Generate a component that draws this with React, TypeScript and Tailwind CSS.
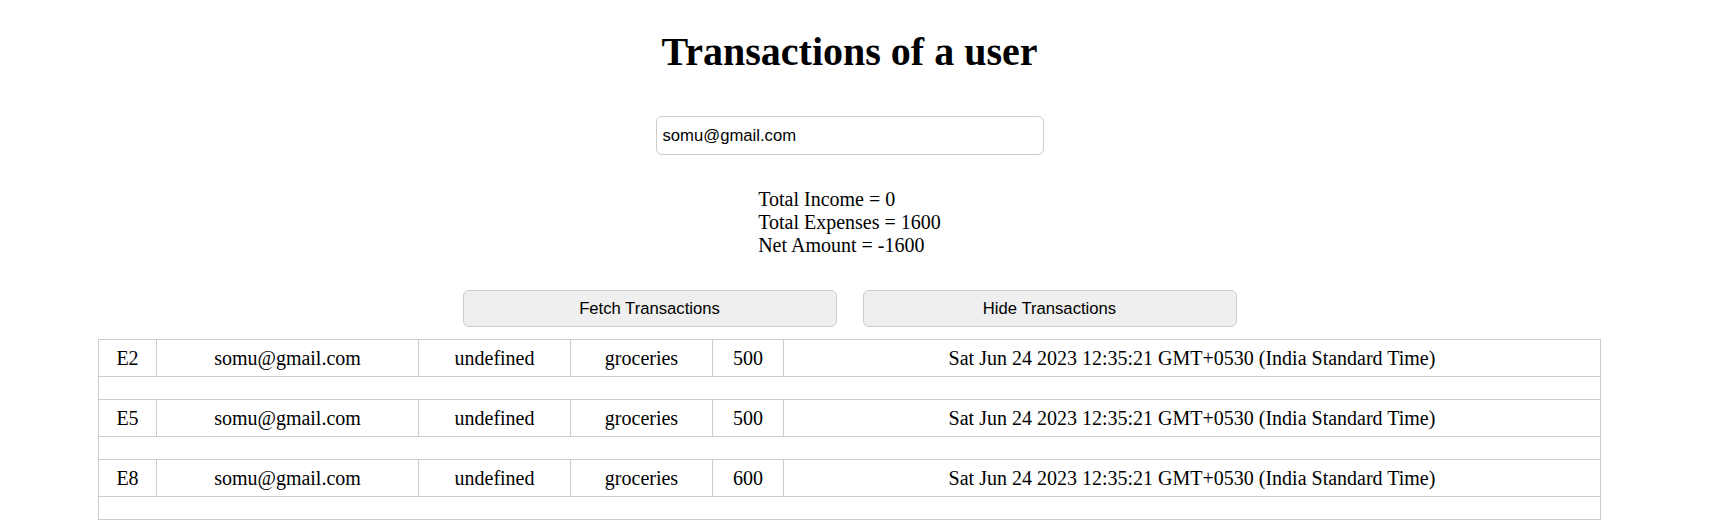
import React from "react";

interface Transaction {
  id: string;
  email: string;
  type: string;
  category: string;
  amount: number;
  date: string;
}

const transactions: Transaction[] = [
  {
    id: "E2",
    email: "somu@gmail.com",
    type: "undefined",
    category: "groceries",
    amount: 500,
    date: "Sat Jun 24 2023 12:35:21 GMT+0530 (India Standard Time)",
  },
  {
    id: "E5",
    email: "somu@gmail.com",
    type: "undefined",
    category: "groceries",
    amount: 500,
    date: "Sat Jun 24 2023 12:35:21 GMT+0530 (India Standard Time)",
  },
  {
    id: "E8",
    email: "somu@gmail.com",
    type: "undefined",
    category: "groceries",
    amount: 600,
    date: "Sat Jun 24 2023 12:35:21 GMT+0530 (India Standard Time)",
  },
];

const App: React.FC = () => {
  const cell = "border border-[#cccccc] px-2 py-[6px] text-center leading-[24px]";

  return (
    <div className="flex flex-col w-[1699px] min-h-[528px] bg-white font-['Liberation_Serif',serif] text-[20px] text-black">
      <h1 className="mt-[29px] text-center text-[40px] font-bold leading-[46px]">
        Transactions of a user
      </h1>

      <div className="flex justify-center mt-[41px]">
        <input
          type="text"
          defaultValue="somu@gmail.com"
          className="w-[388px] h-[39px] rounded-[6px] border border-[#cccccc] px-[6px] font-['Liberation_Sans',sans-serif] text-[16.67px] text-black outline-none"
        />
      </div>

      <div className="mt-[33px] text-center">
        <div className="inline-block text-left leading-[23px]">
          <div>Total Income = 0</div>
          <div>Total Expenses = 1600</div>
          <div>Net Amount = -1600</div>
        </div>
      </div>

      <div className="mt-[30px] flex justify-center gap-[26px]">
        <button className="w-[374px] h-[37px] rounded-[6px] border border-[#cccccc] bg-[#efefef] font-['Liberation_Sans',sans-serif] text-[16.67px] text-black">
          Fetch Transactions
        </button>
        <button className="w-[374px] h-[37px] rounded-[6px] border border-[#cccccc] bg-[#efefef] font-['Liberation_Sans',sans-serif] text-[16.67px] text-black">
          Hide Transactions
        </button>
      </div>

      <table className="mt-[12px] mx-auto w-[1503px] table-fixed border-collapse border border-[#cccccc]">
        <colgroup>
          <col className="w-[58px]" />
          <col className="w-[262px]" />
          <col className="w-[152px]" />
          <col className="w-[142px]" />
          <col className="w-[71px]" />
          <col />
        </colgroup>
        <tbody>
          {transactions.map((t) => (
            <React.Fragment key={t.id}>
              <tr>
                <td className={cell}>{t.id}</td>
                <td className={cell}>{t.email}</td>
                <td className={cell}>{t.type}</td>
                <td className={cell}>{t.category}</td>
                <td className={cell}>{t.amount}</td>
                <td className={cell}>{t.date}</td>
              </tr>
              <tr>
                <td colSpan={6} className="border border-[#cccccc] h-[23px] p-0"></td>
              </tr>
            </React.Fragment>
          ))}
        </tbody>
      </table>
    </div>
  );
};

export default App;
